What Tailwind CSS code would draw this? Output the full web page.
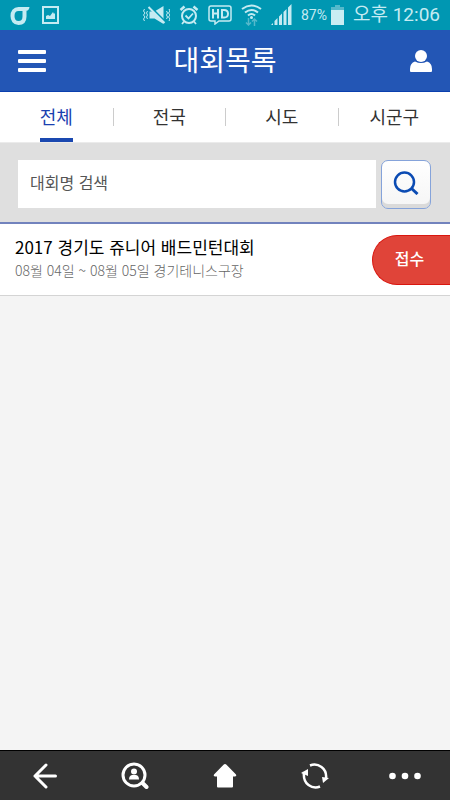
<!DOCTYPE html>
<html lang="ko">
<head>
<meta charset="utf-8">
<meta name="viewport" content="width=device-width, initial-scale=1">
<title>대회목록</title>
<script src="https://cdn.jsdelivr.net/npm/@tailwindcss/browser@4"></script>
</head>
<body class="flex min-h-screen flex-col bg-[#f4f4f4] font-['Noto_Sans_CJK_KR','Noto_Sans',sans-serif] text-[#333]">

<!-- Status bar -->
<div class="flex h-[30px] items-center justify-between bg-[#0097b2] px-[10px] text-[#c5ebf2]">
  <div class="flex items-center gap-3">
    <svg class="h-5 w-5" viewBox="0 0 20 20" fill="none" stroke="currentColor"><path stroke-width="4" d="M12 4H8.500C4.500 4 2.500 7 2.500 11S4.500 18 8.500 18S14.500 15.500 14.500 11.500V6"/><path fill="currentColor" stroke="none" d="M9 2h10.500q-.5 4-4 4H9z"/></svg>
    <svg class="h-[18px] w-[17px]" viewBox="0 0 17 18"><path fill="none" stroke="currentColor" stroke-width="2" d="M1 1h15v16H1z"/><path fill="currentColor" d="M4 13V10l2-1 2 1 3-4 1 2 1-1v6z"/></svg>
  </div>
  <div class="flex items-center gap-[9px]">
    <svg class="h-5 w-7" viewBox="0 0 28 20" fill="none" stroke="currentColor"><path d="M2.500 4l-1 2 1.500 2-1.500 2 1.500 2-1.500 2 1 2M5.500 6l-1 2 1 2-1 2 1 2M27 4l1 2-1.500 2 1.500 2-1.500 2 1.500 2-1 2M24.500 6l1 2-1 2 1 2-1 2"/><path fill="currentColor" stroke="none" d="M7.500 6.500h5l9-5.500v18l-9-5.500h-5z"/><path stroke="#0097b2" stroke-width="2" d="M8 1.500l16 16"/><path stroke-width="2" d="M6.500 2l16 16"/></svg>
    <svg class="h-5 w-5" viewBox="0 0 20 20" fill="none" stroke="currentColor" stroke-width="2"><circle cx="10" cy="11" r="7"/><path stroke-width="1.800" d="M6.500 10.500l3 3 4.500-5M5 16.500L3 19M15 16.500l2 2.500"/><path stroke-width="2.500" d="M1.500 5l4-3.500M18.500 5l-4-3.500"/></svg>
    <svg class="h-5 w-6" viewBox="0 0 24 20" fill="none" stroke="currentColor"><path stroke-width="1.500" d="M3 1h18q2 0 2 2v11q0 2-2 2H11l-4 3v-3H3q-2 0-2-2V3q0-2 2-2z"/><path stroke-width="2" d="M5 4v9.500M10 4v9.500M5 8.500h5M14 5h2q4 0 4 3.800T16 12.500h-2z"/></svg>
    <svg class="h-[22px] w-[21px]" viewBox="0 0 21 22" fill="none" stroke="currentColor" stroke-width="2"><path d="M1 5q9.500-7 19 0M4 8.500q6.500-5 13 0M7 11.500q3.500-3 7 0"/><circle cx="10.500" cy="13.500" r="1.500" fill="currentColor" stroke="none"/><path stroke="#55b9cb" stroke-width="1.500" d="M7.500 14v7M5 18.500L7.500 21l2.500-2.500M13.500 22v-7M11 17.500L13.500 15l2.500 2.500"/></svg>
    <svg class="h-[22px] w-[21px]" viewBox="0 0 21 22" fill="currentColor"><path d="M0 21l2-2v2zM3.500 21v-4l3-3v7zM8 21v-8.500l3-3V21zM12.500 21V8l3-3v16zM17 21V3.500L20.500 0v21z"/></svg>
    <div class="flex items-center gap-1">
      <span class="font-['Roboto'] text-[14px] leading-none">87%</span>
      <svg class="h-5 w-[13px]" viewBox="0 0 13 20"><path fill="#55b9cb" d="M4 0h5v2h4v3H0V2h4z"/><path fill="#c9edf3" d="M0 5h13v15H0z"/></svg>
    </div>
    <span class="font-['Roboto','Noto_Sans_CJK_KR',sans-serif] text-[19px] leading-[30px] whitespace-nowrap">오후 12:06</span>
  </div>
</div>

<!-- App header -->
<header class="grid h-[62px] grid-cols-[1fr_auto_1fr] items-center border-b border-[#0a3fae] bg-[#2356b5] px-[18px] text-white">
  <button type="button" aria-label="메뉴" class="justify-self-start">
    <svg class="h-6 w-7" viewBox="0 0 28 24" fill="currentColor"><rect y="1" width="28" height="4" rx="1"/><rect y="10" width="28" height="4" rx="1"/><rect y="19" width="28" height="4" rx="1"/></svg>
  </button>
  <h1 class="pb-1 text-[28px] leading-[40px] font-normal">대회목록</h1>
  <button type="button" aria-label="내 정보" class="justify-self-end">
    <svg class="h-6 w-[22px]" viewBox="0 0 22 24" fill="currentColor"><circle cx="11" cy="7" r="6"/><path d="M0 20q0-6 5-7.500q6 3 12 0q5 1.500 5 7.500v2q0 1-1 1H1q-1 0-1-1z"/></svg>
  </button>
</header>

<!-- Region tabs -->
<nav class="grid h-[51px] grid-cols-4 items-stretch border-b border-[#ebebeb] bg-white text-[18px] leading-[26px]">
  <a href="#all" aria-current="page" class="flex justify-center text-[#1a3fb0]"><span class="border-b-4 border-[#1a48b0] pt-[11px]">전체</span></a>
  <a href="#nation" class="flex items-center justify-center"><span class="mr-auto h-[18px] w-px bg-[#ccc]"></span><span class="pb-[2px]">전국</span><span class="ml-auto"></span></a>
  <a href="#province" class="flex items-center justify-center"><span class="mr-auto h-[18px] w-px bg-[#ccc]"></span><span class="pb-[2px]">시도</span><span class="ml-auto"></span></a>
  <a href="#city" class="flex items-center justify-center"><span class="mr-auto h-[18px] w-px bg-[#ccc]"></span><span class="pb-[2px]">시군구</span><span class="ml-auto"></span></a>
</nav>

<!-- Search -->
<form class="flex h-[81px] items-center gap-[5px] border-b-2 border-[#7283bd] bg-[#dfdfdf] pt-[3px] pr-[19px] pl-[18px]">
  <input type="text" aria-label="대회명 검색" placeholder="대회명 검색" class="h-12 min-w-0 flex-1 bg-white px-3 pb-1 text-[16px] text-[#333] outline-none placeholder:text-[#555]">
  <button type="button" aria-label="검색" class="flex h-[49px] w-[50px] items-center justify-center rounded-[7px] border border-[#85a3da] bg-linear-to-b from-white to-[#f5f5f5] pb-[2px] shadow-[inset_0_-4px_0_#dadada]">
    <svg class="h-6 w-[26px]" viewBox="0 0 26 24" fill="none" stroke="#0b4bb3"><circle cx="11.500" cy="11" r="9.500" stroke-width="2.500"/><path stroke-width="3" d="M18 17l6.500 6"/></svg>
  </button>
</form>

<!-- Tournament list -->
<main class="flex-1">
  <ul>
    <li class="flex h-[72px] items-center justify-between border-b border-[#d4d4d4] bg-white pl-[15px]">
      <div class="pb-1">
        <h2 class="text-[17px] leading-6 font-normal text-black">2017 경기도 쥬니어 배드민턴대회</h2>
        <p class="text-[14px] leading-[22px] font-light text-[#666]">08월 04일 ~ 08월 05일 경기테니스구장</p>
      </div>
      <button type="button" class="h-[50px] w-[78px] rounded-l-full border border-r-0 border-[#d9160f] bg-[#e04439] pr-1 pb-1 text-[16px] font-medium text-white">접수</button>
    </li>
  </ul>
</main>

<!-- Bottom toolbar -->
<nav class="grid h-[50px] grid-cols-5 items-center justify-items-center border-t border-black bg-[#333] text-white">
  <button type="button" aria-label="뒤로"><svg class="h-[26px] w-6" viewBox="0 0 24 26" fill="none" stroke="currentColor" stroke-width="3" stroke-linecap="round" stroke-linejoin="round"><path d="M13 2L2 13l11 11M2 13h20.500"/></svg></button>
  <button type="button" aria-label="사용자 검색"><svg class="h-[27px] w-7" viewBox="0 0 28 27" fill="none" stroke="currentColor"><circle cx="13" cy="13" r="11" stroke-width="3"/><path stroke-width="4" stroke-linecap="round" d="M21.500 21l4 4"/><circle cx="13" cy="9.500" r="3" fill="currentColor" stroke="none"/><path fill="currentColor" stroke="none" d="M8 17.500q0-4 3-4.500h4q3 .500 3 4.500z"/></svg></button>
  <button type="button" aria-label="홈"><svg class="h-6 w-6" viewBox="0 0 24 24" fill="currentColor"><path d="M12 0q.8 0 1.500.7L23 10.500q1 1.500-.8 2H20v10q0 1-1 1H5q-1 0-1-1v-10H1.800Q0 12 1 10.500L10.500.7Q11.200 0 12 0z"/></svg></button>
  <button type="button" aria-label="새로고침"><svg class="h-[26px] w-7" viewBox="0 0 28 26" fill="none" stroke="currentColor" stroke-width="2.500"><path d="M9 2.500Q15 0 20.500 4T25 16M19 23.500Q13 26 7.500 22T3 9"/><path fill="currentColor" stroke="none" d="M0 10l7-4v7zM21 14l7 1-6 5z"/></svg></button>
  <button type="button" aria-label="더보기"><svg class="h-2 w-8" viewBox="0 0 32 8" fill="currentColor"><circle cx="3.500" cy="4" r="3.300"/><circle cx="16" cy="4" r="3.300"/><circle cx="28.500" cy="4" r="3.300"/></svg></button>
</nav>
</body>
</html>
